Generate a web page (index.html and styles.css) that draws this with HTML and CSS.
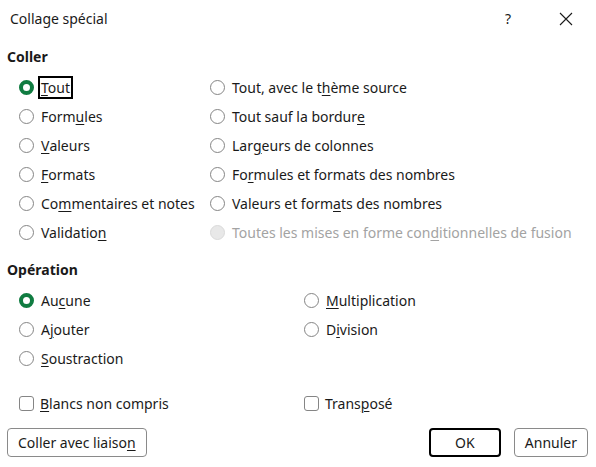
FILE: index.html
```html
<!DOCTYPE html>
<html>
<head>
	<meta charset="UTF-8">
	<title>Collage spécial</title>
	<link rel="stylesheet" href="styles.css">
</head>
<body>
	<div class="dialog">
		<div class="titlebar">
			<span class="title">Collage spécial</span>
			<span class="help">?</span>
			<span class="close">
				<svg width="14" height="14" viewBox="0 0 14 14"><path d="M1 1L13 13M13 1L1 13" stroke="#1a1a1a" stroke-width="1.1" fill="none"/></svg>
			</span>
		</div>

		<div class="group-title">Coller</div>
		<div class="grid paste">
			<label class="opt"><span class="radio on"></span><span class="focus"><u>T</u>out</span></label>
			<label class="opt"><span class="radio"></span>Tout, avec le t<u>h</u>ème source</label>
			<label class="opt"><span class="radio"></span>Form<u>u</u>les</label>
			<label class="opt"><span class="radio"></span>Tout sauf la bordur<u>e</u></label>
			<label class="opt"><span class="radio"></span><u>V</u>aleurs</label>
			<label class="opt"><span class="radio"></span>Lar<u>g</u>eurs de colonnes</label>
			<label class="opt"><span class="radio"></span><u>F</u>ormats</label>
			<label class="opt"><span class="radio"></span>Fo<u>r</u>mules et formats des nombres</label>
			<label class="opt"><span class="radio"></span>Co<u>m</u>mentaires et notes</label>
			<label class="opt"><span class="radio"></span>Valeurs et form<u>a</u>ts des nombres</label>
			<label class="opt"><span class="radio"></span>Validatio<u>n</u></label>
			<label class="opt disabled"><span class="radio"></span>Toutes les mises en forme con<u>d</u>itionnelles de fusion</label>
		</div>

		<div class="group-title">Opération</div>
		<div class="grid ops">
			<label class="opt"><span class="radio on"></span>Au<u>c</u>une</label>
			<label class="opt"><span class="radio"></span><u>M</u>ultiplication</label>
			<label class="opt"><span class="radio"></span>A<u>j</u>outer</label>
			<label class="opt"><span class="radio"></span>D<u>i</u>vision</label>
			<label class="opt"><span class="radio"></span><u>S</u>oustraction</label>
		</div>

		<div class="grid checks">
			<label class="opt"><span class="check"></span><u>B</u>lancs non compris</label>
			<label class="opt"><span class="check"></span>Trans<u>p</u>osé</label>
		</div>

		<div class="buttons">
			<button class="btn">Coller avec liaiso<u>n</u></button>
			<span class="spacer"></span>
			<button class="btn default">OK</button>
			<button class="btn">Annuler</button>
		</div>
	</div>
</body>
</html>
```

FILE: styles.css
```css
html,body{
	margin: 0;
	padding: 0;
	background: #fff;
}
body{
	font-family: "Noto Sans", "Open Sans", sans-serif;
	font-size: 14px;
	color: #1a1a1a;
}
u{
	text-decoration-thickness: 1px;
	text-underline-offset: 2px;
}
.dialog{
	width: 596px;
	height: 467px;
}
.titlebar{
	display: flex;
	align-items: center;
	height: 37px;
	padding-left: 10px;
}
.title{
	flex: 1;
}
.help{
	width: 20px;
	margin-right: 41px;
	text-align: center;
}
.close{
	display: flex;
	width: 14px;
	margin-right: 23px;
}
.group-title{
	font-weight: bold;
	padding-left: 7px;
	height: 34px;
	line-height: 40px;
}
.grid{
	display: grid;
	grid-auto-rows: 29px;
	padding-left: 19px;
}
.paste{
	grid-template-columns: 191px 1fr;
	margin-top: 2px;
	margin-bottom: 3px;
}
.ops{
	grid-template-columns: 285px 1fr;
	height: 91px;
	margin-top: 2px;
	margin-bottom: 12px;
}
.checks{
	grid-template-columns: 285px 1fr;
}
.opt{
	display: flex;
	align-items: center;
	white-space: nowrap;
}
.radio{
	box-sizing: border-box;
	width: 15px;
	height: 15px;
	border: 1px solid #858585;
	border-radius: 50%;
	margin-right: 7px;
	flex: none;
}
.radio.on{
	border: 4px solid #107c41;
}
.disabled{
	color: #a3a3a3;
}
.disabled .radio{
	background: #e8e8e8;
	border-color: #dadada;
}
.focus{
	border: 2px solid #000;
	padding: 0 1px;
	margin-left: -3px;
	line-height: 19px;
}
.check{
	box-sizing: border-box;
	width: 15px;
	height: 15px;
	border: 1px solid #858585;
	border-radius: 3px;
	margin-right: 6px;
	flex: none;
}
.buttons{
	display: flex;
	padding: 10px 8px 0 7px;
	gap: 13px;
}
.spacer{
	flex: 1;
}
.btn{
	font: inherit;
	color: #1a1a1a;
	height: 29px;
	padding: 0 10px;
	background: #fff;
	border: 1px solid #8a8a8a;
	border-radius: 4px;
	min-width: 73px;
}
.btn.default{
	border: 2px solid #000;
	min-width: 72px;
}
```
